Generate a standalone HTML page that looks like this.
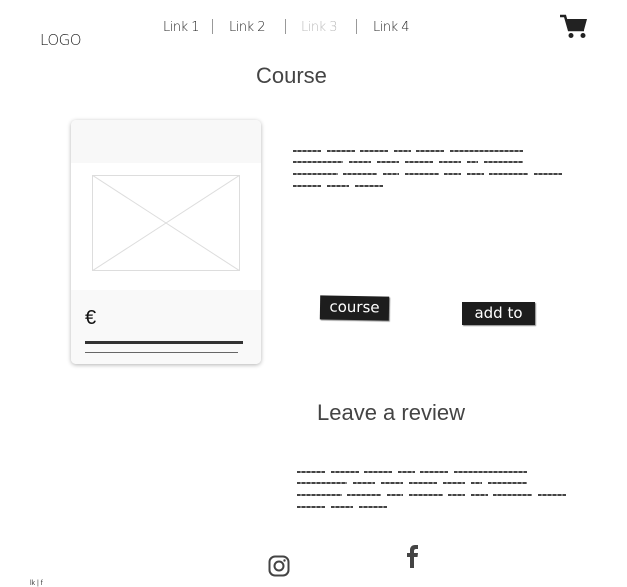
<!DOCTYPE html>
<html><head><meta charset="utf-8">
<style>
*{margin:0;padding:0;box-sizing:border-box}
body{width:627px;height:587px;background:#fff;position:relative;overflow:hidden;font-family:"Liberation Sans",sans-serif;color:#222}
.a{position:absolute}
.nav{top:20px;font-size:13px;color:#222;font-family:"DejaVu Sans","Liberation Sans",sans-serif;font-weight:200;letter-spacing:-0.5px}
.sep{top:19px;width:1px;height:15px;background:#999}
.sq{font-size:8px;line-height:11.6px;color:transparent;font-family:"Liberation Mono",monospace;white-space:nowrap;letter-spacing:0.8px}
.sq span{background:repeating-linear-gradient(90deg,#444 0 3px,#888 3px 5px) 0 55%/100% 2px no-repeat}
.btn{background:#1d1d1d;color:#fff;font-size:15px;font-family:"DejaVu Sans",sans-serif;text-align:center;box-shadow:1px 1px 1px #888}
</style></head><body>
<div class="a" style="left:40px;top:31px;font-size:15px;font-family:'DejaVu Sans',sans-serif;font-weight:200;letter-spacing:-0.5px">LOGO</div>
<div class="a nav" style="left:163px">Link 1</div>
<div class="a sep" style="left:212px"></div>
<div class="a nav" style="left:229px">Link 2</div>
<div class="a sep" style="left:285px"></div>
<div class="a nav" style="left:301px;color:#bbb">Link 3</div>
<div class="a sep" style="left:356px"></div>
<div class="a nav" style="left:373px">Link 4</div>
<svg class="a" style="left:560px;top:14px" width="29" height="25" viewBox="0 0 29 25"><path d="M0 2h5l4 14h15" fill="none" stroke="#222" stroke-width="2.5"/><path d="M7 5h20l-3 11H9z" fill="#222"/><circle cx="11" cy="21.5" r="2.5" fill="#222"/><circle cx="23" cy="21.5" r="2.5" fill="#222"/></svg>
<div class="a" style="left:256px;top:63px;font-size:22px;color:#444">Course</div>

<div class="a" style="left:71px;top:120px;width:190px;height:244px;border-radius:5px;box-shadow:0 1px 4px rgba(0,0,0,.3);background:#fff;overflow:hidden">
<div style="height:43px;background:#f8f8f8"></div>
<svg style="position:absolute;left:21px;top:55px" width="148" height="96"><rect x="0.5" y="0.5" width="147" height="95" fill="none" stroke="#ddd"/><line x1="0" y1="0" x2="148" y2="96" stroke="#ddd"/><line x1="148" y1="0" x2="0" y2="96" stroke="#ddd"/></svg>
<div style="position:absolute;left:0;top:170px;width:190px;height:74px;background:#f9f9f9"></div>
<div style="position:absolute;left:14px;top:187px;font-size:20px;color:#111">€</div>
<div style="position:absolute;left:14px;top:221px;width:158px;height:3px;background:#333"></div>
<div style="position:absolute;left:14px;top:232px;width:153px;height:1px;background:#666"></div>
</div>

<div class="a sq" style="left:293px;top:145px"><span>aaaaa</span> <span>aaaaa</span> <span>aaaaa</span> <span>aaa</span> <span>aaaaa</span>  <span>aaaaaaaaaaaaa</span><br><span>aaaaaaaaa</span> <span>aaaa</span>  <span>aaaa</span> <span>aaaaa</span>  <span>aaaa</span> <span>aa</span> <span>aaaaaaa</span><br><span>aaaaaaaa</span>  <span>aaaaaa</span> <span>aaa</span> <span>aaaaaa</span> <span>aaa</span>  <span>aaa</span> <span>aaaaaaa</span> <span>aaaaa</span><br><span>aaaaa</span> <span>aaaa</span> <span>aaaaa</span></div>

<div class="a btn" style="left:320px;top:296px;width:69px;height:24px;line-height:22px;transform:rotate(1deg)">course</div>
<div class="a btn" style="left:462px;top:302px;width:73px;height:23px;line-height:23px">add to</div>

<div class="a" style="left:317px;top:400px;font-size:22px;color:#444">Leave a review</div>
<div class="a sq" style="left:297px;top:466px"><span>aaaaa</span> <span>aaaaa</span> <span>aaaaa</span> <span>aaa</span> <span>aaaaa</span>  <span>aaaaaaaaaaaaa</span><br><span>aaaaaaaaa</span> <span>aaaa</span>  <span>aaaa</span> <span>aaaaa</span>  <span>aaaa</span> <span>aa</span> <span>aaaaaaa</span><br><span>aaaaaaaa</span>  <span>aaaaaa</span> <span>aaa</span> <span>aaaaaa</span> <span>aaa</span>  <span>aaa</span> <span>aaaaaaa</span> <span>aaaaa</span><br><span>aaaaa</span> <span>aaaa</span> <span>aaaaa</span></div>

<svg class="a" style="left:268px;top:555px" width="22" height="22" viewBox="0 0 22 22"><rect x="1.5" y="1.5" width="19" height="19" rx="5.5" fill="none" stroke="#444" stroke-width="2"/><circle cx="11" cy="11" r="4.5" fill="none" stroke="#444" stroke-width="2"/><circle cx="16.5" cy="5.5" r="1.2" fill="#444"/></svg>
<svg class="a" style="left:406px;top:545px" width="14" height="23" viewBox="0 0 14 23"><path d="M4 23V12H1V8h3V5c0-3 2-5 5-5h3v4H10c-1 0-2 .5-2 2v2h4l-.5 4H8v11z" fill="#444"/></svg>
<div class="a" style="left:30px;top:580px;font-size:7px;color:#444">lk | f</div>
</body></html>
